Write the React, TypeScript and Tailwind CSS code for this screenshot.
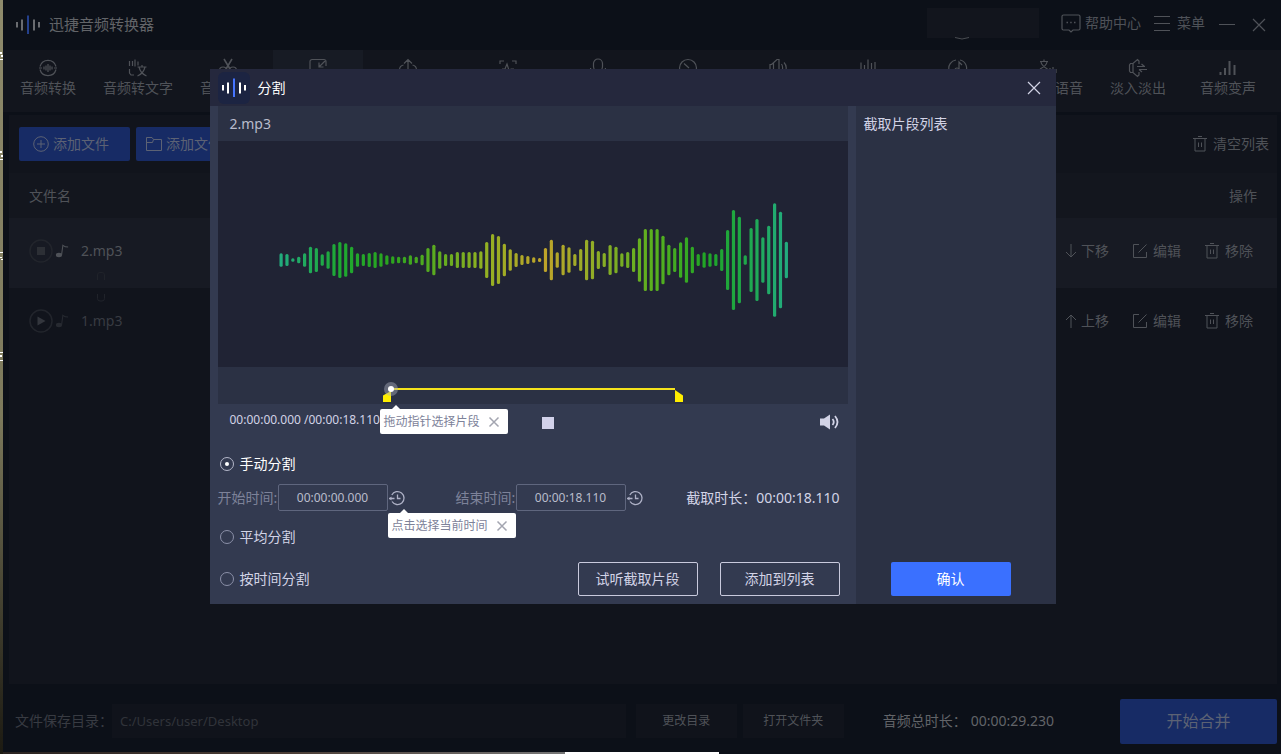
import { useState } from "react";
import type { ReactNode } from "react";

type IconProps = { className?: string };

const TOOLS: { label: string; icon: ReactNode; active?: boolean; spaced?: boolean }[] = [
  {
    label: "音频转换",
    icon: (
      <>
        <path d="M2 8.500A8.300 8.300 0 0 1 18 8.500M18 11.500A8.300 8.300 0 0 1 2 11.500" />
        <path d="M1 10h3M16 10h3M6 8.500v3M8 7.500v5M10 6v8M12 7.500v5M14 8.500v3" />
      </>
    ),
  },
  {
    label: "音频转文字",
    icon: (
      <>
        <path d="M1.500 3v5M4.500 3v5M7 1.500v7M10 3.500v4M1.500 11v4l1.500 2h3" />
        <path d="M9.500 9h9M14 7v2M11 9c1 4.500 4 7.500 7.500 9M17 9c-1 4.500-4 7.500-7.500 9" />
      </>
    ),
  },
  {
    label: "音频剪切",
    icon: (
      <>
        <path d="M6 1l6 10M14 1L8 11" strokeWidth="1.600" />
        <circle cx="5" cy="12.500" r="3.500" />
        <circle cx="15" cy="12.500" r="3.500" />
      </>
    ),
  },
  {
    label: "音频合并",
    active: true,
    icon: <path d="M18 8V3.500a2 2 0 0 0-2-2H4a2 2 0 0 0-2 2v13a2 2 0 0 0 2 2h12a2 2 0 0 0 2-2V12M17 3l-6 6M11 4.500V9h4.500" />,
  },
  {
    label: "音频提取",
    icon: <path d="M10 15V1.500M6 5.500l4-4 4 4M5.500 7C3 7.500 1.500 9.500 1.500 12a5 5 0 0 0 5 5h7a5 5 0 0 0 5-5c0-2.500-1.500-4.500-4-5" />,
  },
  {
    label: "音频识别",
    spaced: true,
    icon: <path d="M2 6V3h4M14 3h4v3M2 14v3h4M14 17h4v-3M4 11h3l2-5 2.500 8 1.500-3h3" />,
  },
  {
    label: "录音",
    icon: (
      <>
        <rect x="5.500" y="1" width="9" height="12" rx="4.500" />
        <path d="M2.500 10a7.500 7.500 0 0 0 15 0M10 16v3" />
      </>
    ),
  },
  {
    label: "音频变速",
    icon: (
      <>
        <circle cx="10" cy="10" r="8.500" />
        <path d="M6 5.500l5 4.500" />
      </>
    ),
  },
  {
    label: "音量调整",
    icon: <path d="M3.500 6.500L9 1.500h2v17H9l-5.500-5H2v-7h1.500M5.500 5v10M13.500 6c1.500 2 1.500 6 0 8M16 4.500c3 3 3 8 0 11" />,
  },
  { label: "音频降噪", icon: <path d="M3 4.500v11M6.500 7v8M10 1.500v16M13.500 5v10M17 4v12" /> },
  {
    label: "音频压缩",
    icon: (
      <>
        <path d="M8 2A8.300 8.300 0 1 0 12 18M12 2a8.300 8.300 0 0 1 5 13" />
        <circle cx="9" cy="12" r="2" />
        <path d="M11 12V4l3 3" />
      </>
    ),
  },
  {
    label: "文字转语音",
    icon: <path d="M2 3.500h8M6 1.500v2M3 4c.500 3 3 5 6.500 7M9 4c-.500 3-3 5-7 7M12 10v6M15 9v9M18 11v4" />,
  },
  {
    label: "淡入淡出",
    icon: (
      <>
        <path d="M11 6V3L9.500 1.500 5 5.500H2.500L1.500 7v6l1 1.500H5l4.500 4 1.500-1.500v-3M5 5.500v9" />
        <path d="M9 8.500h8M13.500 6l3 2.500M19 11.500h-8M14 14l-3-2.500" />
      </>
    ),
  },
  { label: "音频变声", icon: <path d="M2.500 14v3M7 10v7M11.500 3v14M16.500 7v10" strokeWidth="2" /> },
];

// half-heights of the waveform bars, in thirds of a pixel
const WAVE = [
  20, 18, 5, 10, 20, 40, 36, 17, 26, 48, 54, 50, 40, 20, 18, 21, 24, 20, 14, 11, 10, 10, 14, 10, 16,
  36, 46, 26, 18, 18, 24, 24, 24, 24, 26, 54, 78, 72, 49, 32, 21, 15, 12, 8, 6, 36, 61, 23, 46, 38,
  18, 33, 61, 58, 27, 21, 45, 40, 20, 24, 36, 65, 93, 93, 93, 73, 46, 36, 53, 68, 40, 18, 23, 20,
  18, 33, 90, 150, 130, 14, 96, 123, 68, 103, 170, 145, 55,
];

const FILES = [
  { name: "2.mp3", playing: true, move: "下移" },
  { name: "1.mp3", playing: false, move: "上移" },
];

export default function App() {
  const [mode, setMode] = useState("manual");
  const [start, setStart] = useState("00:00:00.000");
  const [end, setEnd] = useState("00:00:18.110");

  return (
    <div className="relative flex h-screen min-h-[700px] overflow-hidden bg-[#0c1018] font-['Noto_Sans','Noto_Sans_CJK_SC',sans-serif] text-sm text-[#4f5258]">
      <DesktopEdge />
      <div className="flex min-w-0 flex-1 flex-col">
        <TitleBar />
        <nav className="flex h-[62px] shrink-0 bg-[#12151d]">
          {TOOLS.map((tool) => (
            <button
              key={tool.label}
              type="button"
              className={`flex w-[90px] shrink-0 flex-col items-center pt-2 leading-5 ${
                tool.active ? "bg-[#171b24]" : ""
              } ${tool.spaced ? "ml-2.5" : ""}`}
            >
              <svg viewBox="0 0 20 20" className="h-5 w-5 shrink-0 fill-none stroke-current" strokeWidth="1.200">
                {tool.icon}
              </svg>
              {tool.label}
            </button>
          ))}
        </nav>
        <FileList />
        <Footer />
        <div className="flex h-0.5 shrink-0">
          <div className="w-[44%] bg-linear-to-r from-[#2a2320] via-[#4b3d35] to-[#777]" />
          <div className="w-[12%] bg-white" />
        </div>
      </div>

      {/* Split dialog */}
      <div className="absolute inset-0 flex items-start justify-center pt-[69px] pr-4">
        <section role="dialog" aria-label="分割" className="w-[846px] bg-[#333a50] text-[#d2d3e6]">
          <header className="flex h-[37px] items-center bg-[#25283d] pr-3.5 pl-2">
            <div className="flex h-8 w-8 items-center justify-center rounded-md bg-[#1c2442]">
              <LogoMark className="text-white" bar="#4674ff" />
            </div>
            <h2 className="ml-2 text-white">分割</h2>
            <button type="button" aria-label="关闭" className="ml-auto">
              <Cross className="h-4 w-4" />
            </button>
          </header>
          <div className="flex">
            <div className="min-w-0 flex-1 px-2 pb-2">
              <div className="flex h-[35px] items-center bg-[#2b3144] px-3 text-[#b9bccb]">2.mp3</div>
              <Waveform />
              <Timeline />
              <div className="relative flex h-9 items-center px-3 text-xs">
                <span className="pb-1">00:00:00.000 /00:00:18.110</span>
                <button type="button" aria-label="停止" className="absolute top-[13px] left-[324px] h-3 w-3 bg-[#d2d1ea]" />
                <button type="button" aria-label="音量" className="ml-auto -mr-1">
                  <Volume className="h-5 w-5" />
                </button>
                <Tip className="top-[5px] left-[162px]">拖动指针选择片段</Tip>
              </div>

              <div className="pt-3.5">
                <Radio label="手动分割" value="manual" mode={mode} onChange={setMode} />
                <div className="relative mt-2.5 flex h-[27px] items-center">
                  <TimeField id="start" label="开始时间:" value={start} onChange={setStart} />
                  <div className="w-[51px]" />
                  <TimeField id="end" label="结束时间:" value={end} onChange={setEnd} />
                  <p className="mr-2 ml-auto">截取时长：00:00:18.110</p>
                  <Tip className="top-[29px] left-[170px]">点击选择当前时间</Tip>
                </div>
                <div className="mt-4">
                  <Radio label="平均分割" value="average" mode={mode} onChange={setMode} />
                </div>
                <div className="mt-[15px] flex items-center">
                  <Radio label="按时间分割" value="time" mode={mode} onChange={setMode} />
                  <button type="button" className="ml-auto h-[34px] w-[120px] rounded-xs border border-[#c9cadd]">
                    试听截取片段
                  </button>
                  <button type="button" className="mr-2 ml-[22px] h-[34px] w-[120px] rounded-xs border border-[#c9cadd]">
                    添加到列表
                  </button>
                </div>
              </div>
            </div>
            <aside className="flex w-[200px] flex-col bg-[#2b3144] px-2 pt-2 pb-2">
              <h3>截取片段列表</h3>
              <button type="button" className="mt-auto ml-[27px] h-[34px] w-[120px] rounded-xs bg-[#3a70ff] text-white">
                确认
              </button>
            </aside>
          </div>
        </section>
      </div>
    </div>
  );
}

function TitleBar() {
  return (
    <header className="flex h-[50px] shrink-0 items-center pr-3.5 pl-3">
      <LogoMark className="text-[#6a6c70]" bar="#24408c" />
      <h1 className="ml-2 text-[15px] text-[#626468]">迅捷音频转换器</h1>
      <div className="relative mr-[22px] mb-1 ml-auto h-[30px] w-28 bg-[#12151d]">
        <svg viewBox="0 0 16 3" className="absolute top-[29px] left-[27px] h-[3px] w-4 fill-none stroke-[#4a4d52]">
          <path d="M1 .5q7 3 14 0" />
        </svg>
      </div>
      <button type="button" className="flex items-center gap-1 pb-1">
        <svg viewBox="0 0 20 20" className="h-5 w-5 fill-none stroke-current" strokeWidth="1.200">
          <path d="M2.500 2h15a1.500 1.500 0 0 1 1.500 1.500v12a1.500 1.500 0 0 1-1.500 1.500H12l-2 2-2-2H2.500A1.500 1.500 0 0 1 1 15.500v-12A1.500 1.500 0 0 1 2.500 2z" />
          <path d="M5.500 9.500h1.500M9.200 9.500h1.500M13 9.500h1.500" strokeWidth="1.500" />
        </svg>
        帮助中心
      </button>
      <button type="button" className="ml-3 flex items-center gap-1.5 pb-1">
        <svg viewBox="0 0 18 18" className="h-[18px] w-[18px] stroke-current" strokeWidth="1.200">
          <path d="M1 2.500h16M1 9.500h16M1 16.500h16" />
        </svg>
        菜单
      </button>
      <button type="button" aria-label="最小化" className="ml-3.5">
        <svg viewBox="0 0 16 16" className="h-4 w-4 stroke-current">
          <path d="M0 7.500h16" />
        </svg>
      </button>
      <button type="button" aria-label="关闭窗口" className="ml-4">
        <Cross className="h-4 w-4" />
      </button>
    </header>
  );
}

function FileList() {
  return (
    <main className="mt-[3px] mr-1 ml-1.5 min-h-0 flex-1 bg-[#11141c] pt-3">
      <div className="flex h-[34px] items-center gap-1.5 pr-2 pl-2.5 text-[#5c6274]">
        <button type="button" className="flex h-full w-[111px] items-center gap-1 rounded-xs bg-[#172b65] pl-3.5">
          <svg viewBox="0 0 16 16" className="h-4 w-4 fill-none stroke-current">
            <circle cx="8" cy="8" r="7.300" />
            <path d="M8 4v8M4 8h8" />
          </svg>
          添加文件
        </button>
        <button type="button" className="flex h-full w-[125px] items-center gap-1 rounded-xs bg-[#172b65] pl-2.5">
          <svg viewBox="0 0 16 16" className="h-4 w-4 fill-none stroke-current">
            <path d="M.500 14.500v-13h5.500l1.500 2h8v11zM.500 6.500h6l1-3" />
          </svg>
          添加文件夹
        </button>
        <button type="button" className="ml-auto flex items-center gap-1.5 text-[#4f5258]">
          <Trash className="h-4 w-3.5" />
          清空列表
        </button>
      </div>
      <table className="mt-3 w-full">
        <thead>
          <tr className="h-[45px] bg-[#13161e]">
            <th className="pl-5 text-left font-normal">文件名</th>
            <th className="pr-5 text-right font-normal">操作</th>
          </tr>
        </thead>
        <tbody>
          {FILES.map((file) => (
            <tr key={file.name} className={file.playing ? "h-[70px] bg-[#171a23]" : "h-[70px]"}>
              <td className="relative pb-1 pl-5">
                <div className="flex items-center">
                  <button type="button" aria-label={file.playing ? "停止播放" : "播放"}>
                    <svg viewBox="0 0 24 24" className="h-6 w-6 fill-none stroke-[#22252c]" strokeWidth="1.500">
                      <circle cx="12" cy="12" r="11" />
                      {file.playing ? (
                        <path d="M8 8h8v8H8z" className="fill-[#2c2f35] stroke-none" />
                      ) : (
                        <path d="M8.500 7.500v9l8-4.500z" className="fill-[#33363d] stroke-none" />
                      )}
                    </svg>
                  </button>
                  <svg
                    viewBox="0 0 16 16"
                    className={`ml-0.5 h-3.5 w-3.5 fill-none stroke-current ${file.playing ? "" : "text-[#272a31]"}`}
                    strokeWidth="1.200"
                  >
                    <ellipse cx="4.500" cy="12.500" rx="3.500" ry="2.500" className="fill-current stroke-none" />
                    <path d="M7.500 12.500L9 1.500q2.500 2 6 2" />
                  </svg>
                  <span className={`ml-3 ${file.playing ? "" : "text-[#383b42]"}`}>{file.name}</span>
                </div>
                <svg
                  viewBox="0 0 8 8"
                  className={`absolute left-[88px] h-2 w-2 fill-none stroke-[#20232a] ${
                    file.playing ? "bottom-2" : "top-1.5"
                  }`}
                >
                  <path d={file.playing ? "M.500 8V3a2.500 2.500 0 0 1 2.500-2.500h2A2.500 2.500 0 0 1 7.500 3v5" : "M.500 0v4.500A2.500 2.500 0 0 0 3 7h2a2.500 2.500 0 0 0 2.500-2.500V0"} />
                </svg>
              </td>
              <td className="pr-6 pb-1">
                <div className="flex justify-end gap-6">
                  <button type="button" className="flex items-center gap-1">
                    <svg viewBox="0 0 12 14" className="h-3.5 w-3 fill-none stroke-current">
                      <path d={file.playing ? "M6 0v13M1 8l5 5 5-5" : "M6 14V1M1 6l5-5 5 5"} />
                    </svg>
                    {file.move}
                  </button>
                  <button type="button" className="flex items-center gap-1.5">
                    <svg viewBox="0 0 14 14" className="h-3.5 w-3.5 fill-none stroke-current">
                      <path d="M6 .5H.5v13h13V8M5.500 8.500l8-8" />
                    </svg>
                    编辑
                  </button>
                  <button type="button" className="flex items-center gap-1.5">
                    <Trash className="h-4 w-3.5" />
                    移除
                  </button>
                </div>
              </td>
            </tr>
          ))}
        </tbody>
      </table>
    </main>
  );
}

function Footer() {
  return (
    <footer className="flex h-[68px] shrink-0 items-center pt-1.5 pr-1 pl-3">
      <label htmlFor="dir" className="w-[97px] whitespace-nowrap text-[#383b42]">
        文件保存目录：
      </label>
      <input
        id="dir"
        readOnly
        value="C:/Users/user/Desktop"
        className="h-[34px] min-w-0 flex-1 bg-[#10131b] px-2 text-[13px] text-[#30333a]"
      />
      <button type="button" className="ml-2.5 h-[34px] w-[101px] bg-[#10131b] text-xs">
        更改目录
      </button>
      <button type="button" className="ml-1.5 h-[34px] w-[101px] bg-[#10131b] text-xs">
        打开文件夹
      </button>
      <p className="ml-[39px] text-[#626468]">
        音频总时长：<span className="ml-1">00:00:29.230</span>
      </p>
      <button type="button" className="ml-[66px] h-[45px] w-[157px] rounded-xs bg-[#172b65] text-base text-[#5c6274]">
        开始合并
      </button>
    </footer>
  );
}

function Waveform() {
  return (
    <div className="flex h-[226px] items-center justify-center bg-[#202334]">
      <svg viewBox="0 0 510 120" className="mt-3 h-[120px] w-[510px]" aria-label="音频波形">
        <defs>
          <linearGradient id="wave" gradientUnits="userSpaceOnUse" x1="0" y1="0" x2="510" y2="0">
            <stop offset="0" stopColor="#22ac80" />
            <stop offset="0.120" stopColor="#1ea832" />
            <stop offset="0.220" stopColor="#2aa51e" />
            <stop offset="0.400" stopColor="#8fb122" />
            <stop offset="0.520" stopColor="#c0a32a" />
            <stop offset="0.600" stopColor="#9aac28" />
            <stop offset="0.740" stopColor="#58b01e" />
            <stop offset="0.840" stopColor="#1fa526" />
            <stop offset="0.920" stopColor="#1fa84c" />
            <stop offset="1" stopColor="#22ac80" />
          </linearGradient>
        </defs>
        {WAVE.map((h, i) => (
          <rect
            key={i}
            x={1.5 + i * 5.875}
            y={60 - h / 3}
            width="3.200"
            height={(h / 3) * 2}
            rx="1.500"
            fill="url(#wave)"
          />
        ))}
      </svg>
    </div>
  );
}

function Timeline() {
  return (
    <div className="relative h-[37px] bg-[#2b3144]">
      <svg viewBox="0 0 310 24" className="absolute top-3 left-[160px] h-6 w-[310px]">
        <path d="M13 10h284" stroke="#f5e31c" strokeWidth="2" />
        <path d="M13 12v11H5v-6.500zM297 11v12h8v-6.500z" fill="#ffee00" />
        <circle cx="13" cy="10" r="7" fill="#a9acba" fillOpacity="0.450" />
        <circle cx="13" cy="10" r="3" fill="#fff" />
      </svg>
      <input
        type="range"
        aria-label="播放位置"
        defaultValue={0}
        className="absolute top-3.5 left-[166px] w-[302px] cursor-pointer opacity-0"
      />
    </div>
  );
}

function Radio({
  label,
  value,
  mode,
  onChange,
}: {
  label: string;
  value: string;
  mode: string;
  onChange: (value: string) => void;
}) {
  const checked = mode === value;
  return (
    <label className={`ml-0.5 flex h-5 items-center gap-1.5 ${checked ? "text-white" : ""}`}>
      <input
        type="radio"
        name="mode"
        value={value}
        checked={checked}
        onChange={() => onChange(value)}
        className="grid h-3.5 w-3.5 appearance-none place-items-center rounded-full border border-[#8b90a8] checked:border-[#b4b7c9] checked:before:h-1 checked:before:w-1 checked:before:rounded-full checked:before:bg-white checked:before:content-['']"
      />
      {label}
    </label>
  );
}

function TimeField({
  id,
  label,
  value,
  onChange,
}: {
  id: string;
  label: string;
  value: string;
  onChange: (value: string) => void;
}) {
  return (
    <div className="flex items-center">
      <label htmlFor={id} className="w-[60px] whitespace-nowrap text-[#7d8299]">
        {label}
      </label>
      <input
        id={id}
        value={value}
        onChange={(e) => onChange(e.target.value)}
        className="h-[27px] w-[110px] rounded-xs border border-[#5f667e] bg-[#333a50] text-center text-xs text-[#b9bccb]"
      />
      <button type="button" aria-label="选择当前时间" className="ml-px">
        <svg viewBox="0 0 16 16" className="h-4 w-4 fill-none stroke-[#aeb1c6]" strokeWidth="1.300">
          <path d="M2.800 5A6.500 6.500 0 1 1 3 11.500" />
          <path d="M8.500 4.500v4h3M0 8.500h5.500" />
          <path d="M2.500 6.500v4L0 8.500z" className="fill-[#aeb1c6] stroke-none" />
        </svg>
      </button>
    </div>
  );
}

function Tip({ className, children }: { className: string; children: ReactNode }) {
  const [open, setOpen] = useState(true);
  if (!open) return null;
  return (
    <div
      role="tooltip"
      className={`absolute z-10 flex h-[25px] w-32 items-center rounded-xs bg-white px-1 text-xs text-[#7d8299] before:absolute before:-top-1 before:left-3 before:border-x-4 before:border-b-4 before:border-x-transparent before:border-b-white before:content-[''] ${className}`}
    >
      {children}
      <button type="button" aria-label="关闭提示" className="ml-2" onClick={() => setOpen(false)}>
        <svg viewBox="0 0 12 12" className="h-3 w-3 stroke-[#a3a5b0]" strokeWidth="1.500">
          <path d="M1.500 1.500l9 9M10.500 1.500l-9 9" />
        </svg>
      </button>
    </div>
  );
}

function DesktopEdge() {
  return (
    <div className="w-[3px] shrink-0 bg-linear-to-b from-[#8f8b6c] via-[#7d7a5c] via-55% to-[#1c1a12]">
      <svg viewBox="0 0 3 400" className="h-[400px] w-[3px] fill-white">
        <path d="M0 52h2v2H0zM1 55h2v2H1zM0 59h3v1H0zM0 151h2v2H0zM1 155h2v2H1zM0 159h3v1H0zM0 252h3v1H0zM0 257h2v1H0zM1 259h2v1H1zM0 352h3v1H0zM0 355h2v2H0zM0 360h3v1H0z" />
      </svg>
    </div>
  );
}

function LogoMark({ className, bar }: IconProps & { bar: string }) {
  return (
    <svg viewBox="0 0 26 20" className={`h-5 w-[26px] shrink-0 stroke-current ${className}`} strokeWidth="2">
      <path d="M2 7v5.500M7 4.500v11M19 4.500v11M24 7v5.500" />
      <path d="M13 .5v18.500" stroke={bar} />
    </svg>
  );
}

function Cross({ className }: IconProps) {
  return (
    <svg viewBox="0 0 16 16" className={`fill-none stroke-current ${className}`} strokeWidth="1.200">
      <path d="M2 2l12 12M14 2L2 14" />
    </svg>
  );
}

function Trash({ className }: IconProps) {
  return (
    <svg viewBox="0 0 14 16" className={`fill-none stroke-current ${className}`}>
      <path d="M0 2.500h14M5 .5h4M2 2.500v12.500h10V2.500M5.500 6.500v4.500M8.500 6.500v4.500" />
    </svg>
  );
}

function Volume({ className }: IconProps) {
  return (
    <svg viewBox="0 0 20 20" className={`fill-none stroke-current ${className}`} strokeWidth="1.800">
      <path d="M0 6.500h4L10 2.500v15L4 13.500H0z" className="fill-current stroke-none" />
      <path d="M12.500 7q2.500 3 0 6M15 4q5 6 0 12" />
    </svg>
  );
}
